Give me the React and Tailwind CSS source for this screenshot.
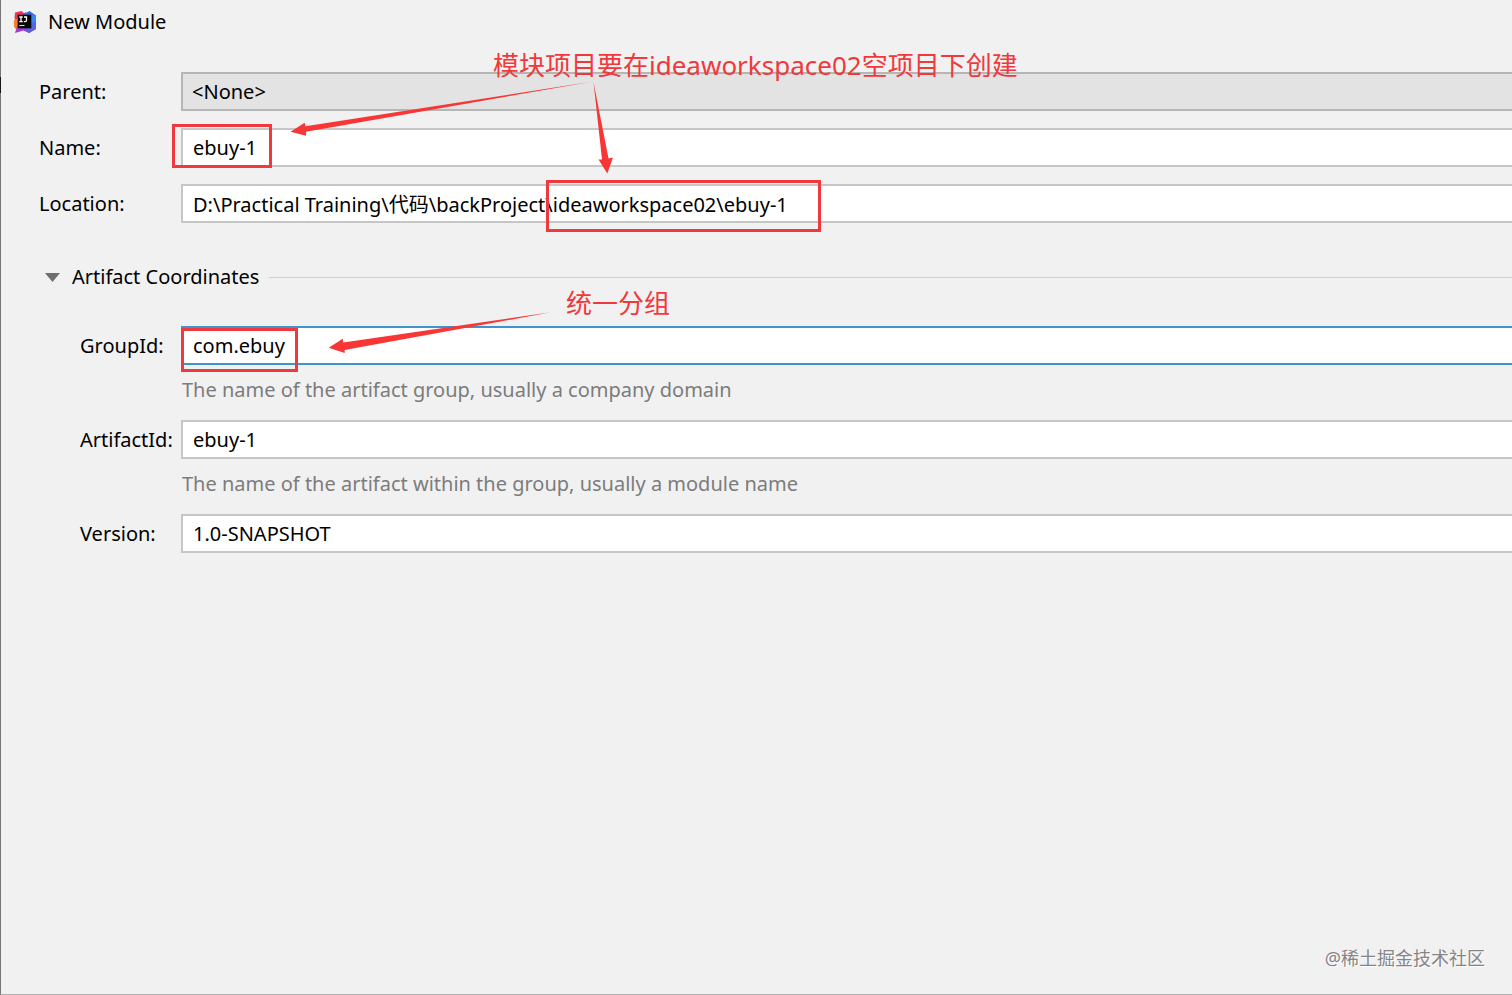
import React from 'react';

function IdeaLogo() {
  return (
    <svg className="size-6 shrink-0" viewBox="0 0 24 24" aria-hidden="true">
      <path d="M2 2.5 8.500 1 12 4v8L3 13 1.500 8z" fill="#f0305f" />
      <path d="M.8 10.500 5 8l3 7-5 4.500-2-3z" fill="#fb7a24" />
      <path d="M11 4 16.500 1 23 5.500V19l-7 4-7-4z" fill="#2f6be8" />
      <path d="M18 4.500 23 5.500V12l-5 4z" fill="#3a86f5" />
      <path d="M18 14l5-3v8l-7 4-3-2z" fill="#5a62e2" />
      <path d="M2 23l2.500-8 7 2 5 6-6-2.500z" fill="#a03bd6" />
      <path d="M10 4l3-2 1.500 2.500z" fill="#8b4ad0" />
      <rect x="4.700" y="4.700" width="13.600" height="13.600" fill="#050505" />
      <path d="M6.300 7h3.400M8 7v4.600M6.300 11.600h3.400M11 7h2.500v3.200q0 1.400-1.300 1.400h-1.400" fill="none" stroke="#fff" strokeWidth="1.300" />
      <path d="M6.300 15.500h5.200" stroke="#ddd" strokeWidth="1.100" />
    </svg>
  );
}

function Field({ id, label, value, indent, focused }) {
  return (
    <div className="flex items-center">
      <label htmlFor={id} className={indent ? 'w-[142px] shrink-0 pl-[41px]' : 'w-[142px] shrink-0'}>
        {label}
      </label>
      <input
        id={id}
        type="text"
        defaultValue={value}
        className={
          focused
            ? 'h-[39px] min-w-0 flex-1 border-y-2 border-l-2 border-[#3f93cf] bg-white px-[10px] text-xl text-black outline-none'
            : 'h-[39px] min-w-0 flex-1 border-y-2 border-l-2 border-[#c6c6c6] bg-white px-[10px] text-xl text-black outline-none'
        }
      />
    </div>
  );
}

function Hint({ children }) {
  return <p className="flex h-[55px] items-center pb-[6px] pl-[143px] text-[#7c7c7c]">{children}</p>;
}

function Annotations() {
  return (
    <div className="pointer-events-none absolute inset-0 text-[26px] leading-8 whitespace-nowrap text-[#f0393c]">
      <svg className="absolute top-0 left-0 h-[400px] w-[900px]" viewBox="0 0 900 400" aria-hidden="true">
        <rect x="0" y="77" width="1" height="16" fill="#15151c" />
        <g fill="#f93636">
          <path d="M593 81.500 305.500 126.300 304.700 122.700 290.500 131.700 306 135.700V131.700z" />
          <path d="M593.500 82 608.500 158.500 613 157.500 607.300 173.500 598.500 159.500 602 159.500z" />
          <path d="M551 312.300 343.300 342.500 342.700 338.700 328.700 347.700 344.700 353V350z" />
        </g>
      </svg>
      <span className="absolute top-[49px] left-[493px]">模块项目要在ideaworkspace02空项目下创建</span>
      <span className="absolute top-[287px] left-[566px]">统一分组</span>
      <div className="absolute top-[124px] left-[172px] h-11 w-[100px] border-3 border-[#f0393c]" />
      <div className="absolute top-[180px] left-[546px] h-[52px] w-[275px] border-3 border-[#f0393c]" />
      <div className="absolute top-[328px] left-[181px] h-11 w-[117px] border-3 border-[#f0393c]" />
    </div>
  );
}

export default function App() {
  return (
    <div className="relative flex min-h-screen flex-col overflow-hidden bg-[#f1f1f1] font-['Noto_Sans','Noto_Sans_CJK_SC',sans-serif] text-xl text-black">
      <div className="flex flex-1 flex-col border-b border-l border-b-[#b0b0b0] border-l-[#777]">
        <header className="flex h-11 items-center gap-[11px] pl-3">
          <IdeaLogo />
          <h1>New Module</h1>
        </header>
        <form className="pt-7 pl-[38px]">
          <div className="flex flex-col gap-[17px]">
            <div className="flex items-center">
              <label htmlFor="parent" className="w-[142px] shrink-0">Parent:</label>
              <select
                id="parent"
                className="h-[39px] min-w-0 flex-1 appearance-none border-y-2 border-l-2 border-[#b6b6b6] bg-[#e3e3e3] px-[9px] text-xl outline-none"
              >
                <option>&lt;None&gt;</option>
              </select>
            </div>
            <Field id="name" label="Name:" value="ebuy-1" />
            <Field id="location" label="Location:" value={'D:\\Practical Training\\代码\\backProject\\ideaworkspace02\\ebuy-1'} />
          </div>
          <div className="mt-10 mb-[35px] flex h-7 items-center gap-[10px]">
            <button type="button" className="flex items-center gap-3 pl-[6px]">
              <svg className="h-[9px] w-[15px]" viewBox="0 0 15 9" aria-hidden="true">
                <path d="M0 0h15L7.500 9z" fill="#6e6e6e" />
              </svg>
              Artifact Coordinates
            </button>
            <div className="h-px flex-1 bg-[#d0d0d0]" />
          </div>
          <Field id="group" label="GroupId:" value="com.ebuy" indent focused />
          <Hint>The name of the artifact group, usually a company domain</Hint>
          <Field id="artifact" label="ArtifactId:" value="ebuy-1" indent />
          <Hint>The name of the artifact within the group, usually a module name</Hint>
          <Field id="version" label="Version:" value="1.0-SNAPSHOT" indent />
        </form>
        <footer className="mt-auto pr-[27px] pb-[22px] text-right text-lg text-[#858585] [text-shadow:1px_1px_1px_#fff]">
          @稀土掘金技术社区
        </footer>
      </div>
      <Annotations />
    </div>
  );
}
